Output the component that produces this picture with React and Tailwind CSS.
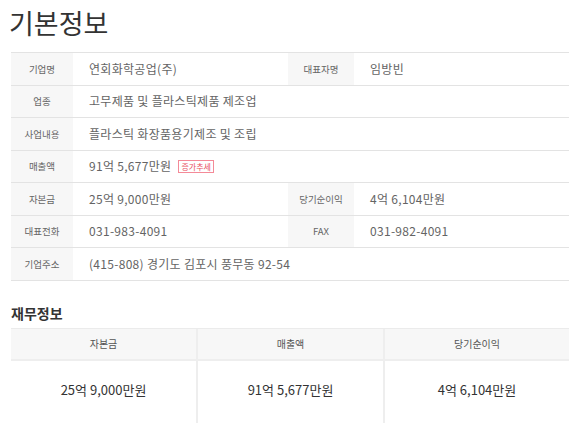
import React from 'react';

const font = { fontFamily: '"Noto Sans CJK KR", "Noto Sans", sans-serif' };

function Label({ children, w }) {
  return (
    <div className={`${w} shrink-0 bg-[#f7f7f7] flex items-center justify-center text-[9.5px] text-[#666]`}>
      {children}
    </div>
  );
}

function Value({ children, w }) {
  return (
    <div className={`${w} flex items-center pl-4 text-[12px] tracking-[0.3px] text-[#646464]`}>
      {children}
    </div>
  );
}

const rows = [
  [['기업명', '연회화학공업(주)'], ['대표자명', '임방빈']],
  [['업종', '고무제품 및 플라스틱제품 제조업']],
  [['사업내용', '플라스틱 화장품용기제조 및 조립']],
  [['매출액', '91억 5,677만원', true]],
  [['자본금', '25억 9,000만원'], ['당기순이익', '4억 6,104만원']],
  [['대표전화', '031-983-4091'], ['FAX', '031-982-4091']],
  [['기업주소', '(415-808) 경기도 김포시 풍무동 92-54']],
];

const finance = [
  ['자본금', '25억 9,000만원'],
  ['매출액', '91억 5,677만원'],
  ['당기순이익', '4억 6,104만원'],
];

export default function App() {
  return (
    <div className="w-[580px] h-[423px] overflow-hidden bg-white" style={font}>
      <h1 className="pl-[9px] pt-[4px] h-[52px] text-[27px] leading-[38px] text-[#333]">기본정보</h1>

      <div className="mx-[11px] border-t border-[#e3e3e3]">
        {rows.map((row, i) => (
          <div key={i} className="flex h-[32.5px] border-b border-[#e3e3e3]">
            <Label w="w-[62px]">{row[0][0]}</Label>
            {row.length === 2 ? (
              <>
                <Value w="w-[215px]">{row[0][1]}</Value>
                <Label w="w-[66px]">{row[1][0]}</Label>
                <Value w="flex-1">{row[1][1]}</Value>
              </>
            ) : (
              <Value w="flex-1">
                {row[0][1]}
                {row[0][2] && (
                  <span className="ml-[7px] border border-[#f48a98] text-[#e8505f] text-[8px] tracking-normal leading-[11px] px-[2px]">
                    증가추세
                  </span>
                )}
              </Value>
            )}
          </div>
        ))}
      </div>

      <h2 className="pl-[11px] mt-[22px] h-[25px] text-[14px] font-bold leading-[20px] text-[#333]">재무정보</h2>

      <div className="mx-[11px] grid grid-cols-[187px_187px_1fr] border-t border-[#ebebeb]">
        {finance.map(([k], i) => (
          <div
            key={k}
            className={`h-[32px] bg-[#f7f7f7] flex items-center justify-center text-[10px] text-[#555] border-b-[2px] border-[#eeeeee] ${i < 2 ? 'border-r-[2px]' : ''}`}
          >
            {k}
          </div>
        ))}
        {finance.map(([k, v], i) => (
          <div
            key={k + 'v'}
            className={`h-[64px] pb-[6px] flex items-center justify-center text-[13px] text-[#333] border-[#eeeeee] ${i < 2 ? 'border-r-[2px]' : ''}`}
          >
            {v}
          </div>
        ))}
      </div>
    </div>
  );
}
